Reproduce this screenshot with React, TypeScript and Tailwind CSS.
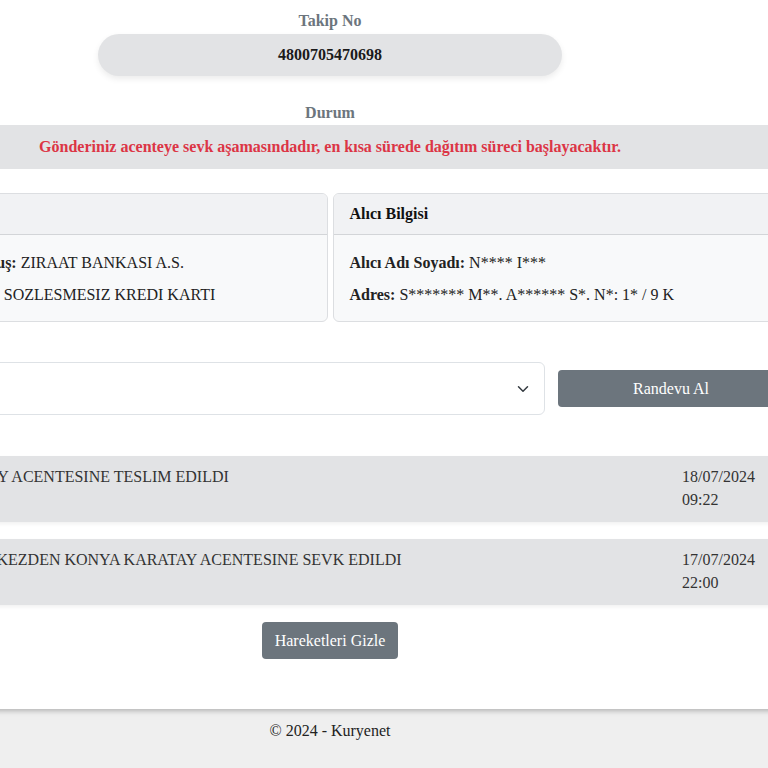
import React from "react";

const movements = [
  {
    text: "KONYA KARATAY ACENTESINE TESLIM EDILDI",
    date: "18/07/2024",
    time: "09:22",
  },
  {
    text: "TRANSFER MERKEZDEN KONYA KARATAY ACENTESINE SEVK EDILDI",
    date: "17/07/2024",
    time: "22:00",
  },
];

function InfoCard({
  title,
  rows,
}: {
  title: string;
  rows: { label: string; value: string }[];
}) {
  return (
    <div className="rounded-[6px] border border-[#dcdee1] bg-[#f8f9fa] overflow-hidden">
      <div className="h-[41px] flex items-center px-4 bg-[#f1f2f4] border-b border-[#d3d5d8] font-bold text-[#111]">
        {title}
      </div>
      <div className="px-4 pt-4 pb-[14px] flex flex-col gap-2">
        {rows.map((r) => (
          <div key={r.label} className="h-6 leading-6 text-[#222] whitespace-nowrap">
            <span className="font-bold">{r.label}:</span> {r.value}
          </div>
        ))}
      </div>
    </div>
  );
}

export default function App() {
  return (
    <div className="w-full h-screen overflow-hidden bg-[#efefef] [font-family:'Liberation_Serif','Times_New_Roman',serif] text-[16px]">
      <div className="w-[930px] -ml-[135px]">
        <main className="bg-white pt-[9px] pb-[50px] shadow-[0_2px_5px_rgba(0,0,0,0.25)] relative">
          <div className="h-6 text-center font-bold text-[#6c757d] leading-6">Takip No</div>
          <div className="mx-auto mt-[1px] w-[464px] h-[42px] rounded-full bg-[#e2e3e5] shadow-[0_3px_6px_rgba(0,0,0,0.08)] flex items-center justify-center font-bold text-[#1a1a1a]">
            4800705470698
          </div>

          <div className="mt-[25px] h-6 text-center font-bold text-[#6c757d] leading-6">Durum</div>
          <div className="h-[44px] bg-[#e2e3e5] flex items-center justify-center font-bold text-[#dc3545]">
            Gönderiniz acenteye sevk aşamasındadır, en kısa sürede dağıtım süreci başlayacaktır.
          </div>

          <div className="mt-6 grid grid-cols-2 gap-[5px]">
            <InfoCard
              title="Gönderici Bilgisi"
              rows={[
                { label: "Gönderici Kuruluş", value: "ZIRAAT BANKASI A.S." },
                { label: "Kart Açıklaması", value: "SOZLESMESIZ KREDI KARTI" },
              ]}
            />
            <InfoCard
              title="Alıcı Bilgisi"
              rows={[
                { label: "Alıcı Adı Soyadı", value: "N**** I***" },
                { label: "Adres", value: "S******* M**. A****** S*. N*: 1* / 9 K" },
              ]}
            />
          </div>

          <div className="mt-10 flex items-center gap-[13px] pl-[11px] pr-[11px]">
            <div className="relative flex-1 h-[53px] rounded-[6px] border border-[#dee2e6] bg-white">
              <svg
                className="absolute right-[13px] top-1/2 -translate-y-1/2"
                width="16"
                height="12"
                viewBox="0 0 16 16"
                fill="none"
                stroke="#343a40"
                strokeWidth="2"
                strokeLinecap="round"
                strokeLinejoin="round"
              >
                <path d="M2 5l6 6 6-6" />
              </svg>
            </div>
            <button className="w-[226px] h-[37px] rounded-[4px] bg-[#6c757d] text-white">
              Randevu Al
            </button>
          </div>

          <div className="mt-[41px] flex flex-col gap-[17px]">
            {movements.map((m) => (
              <div
                key={m.date}
                className="h-[66px] bg-[#e2e3e5] shadow-[0_2px_4px_rgba(0,0,0,0.06)] flex justify-between pl-[11px] pr-[40px] pt-[9px] leading-[23px] text-[#333]"
              >
                <div className="whitespace-nowrap">{m.text}</div>
                <div className="shrink-0">
                  <div>{m.date}</div>
                  <div>{m.time}</div>
                </div>
              </div>
            ))}
          </div>

          <div className="mt-[17px] flex justify-center">
            <button className="h-[37px] px-[13px] rounded-[4px] bg-[#6c757d] text-white">
              Hareketleri Gizle
            </button>
          </div>
        </main>

        <footer className="pt-[10px] text-center leading-6 text-[#222]">© 2024 - Kuryenet</footer>
      </div>
    </div>
  );
}
